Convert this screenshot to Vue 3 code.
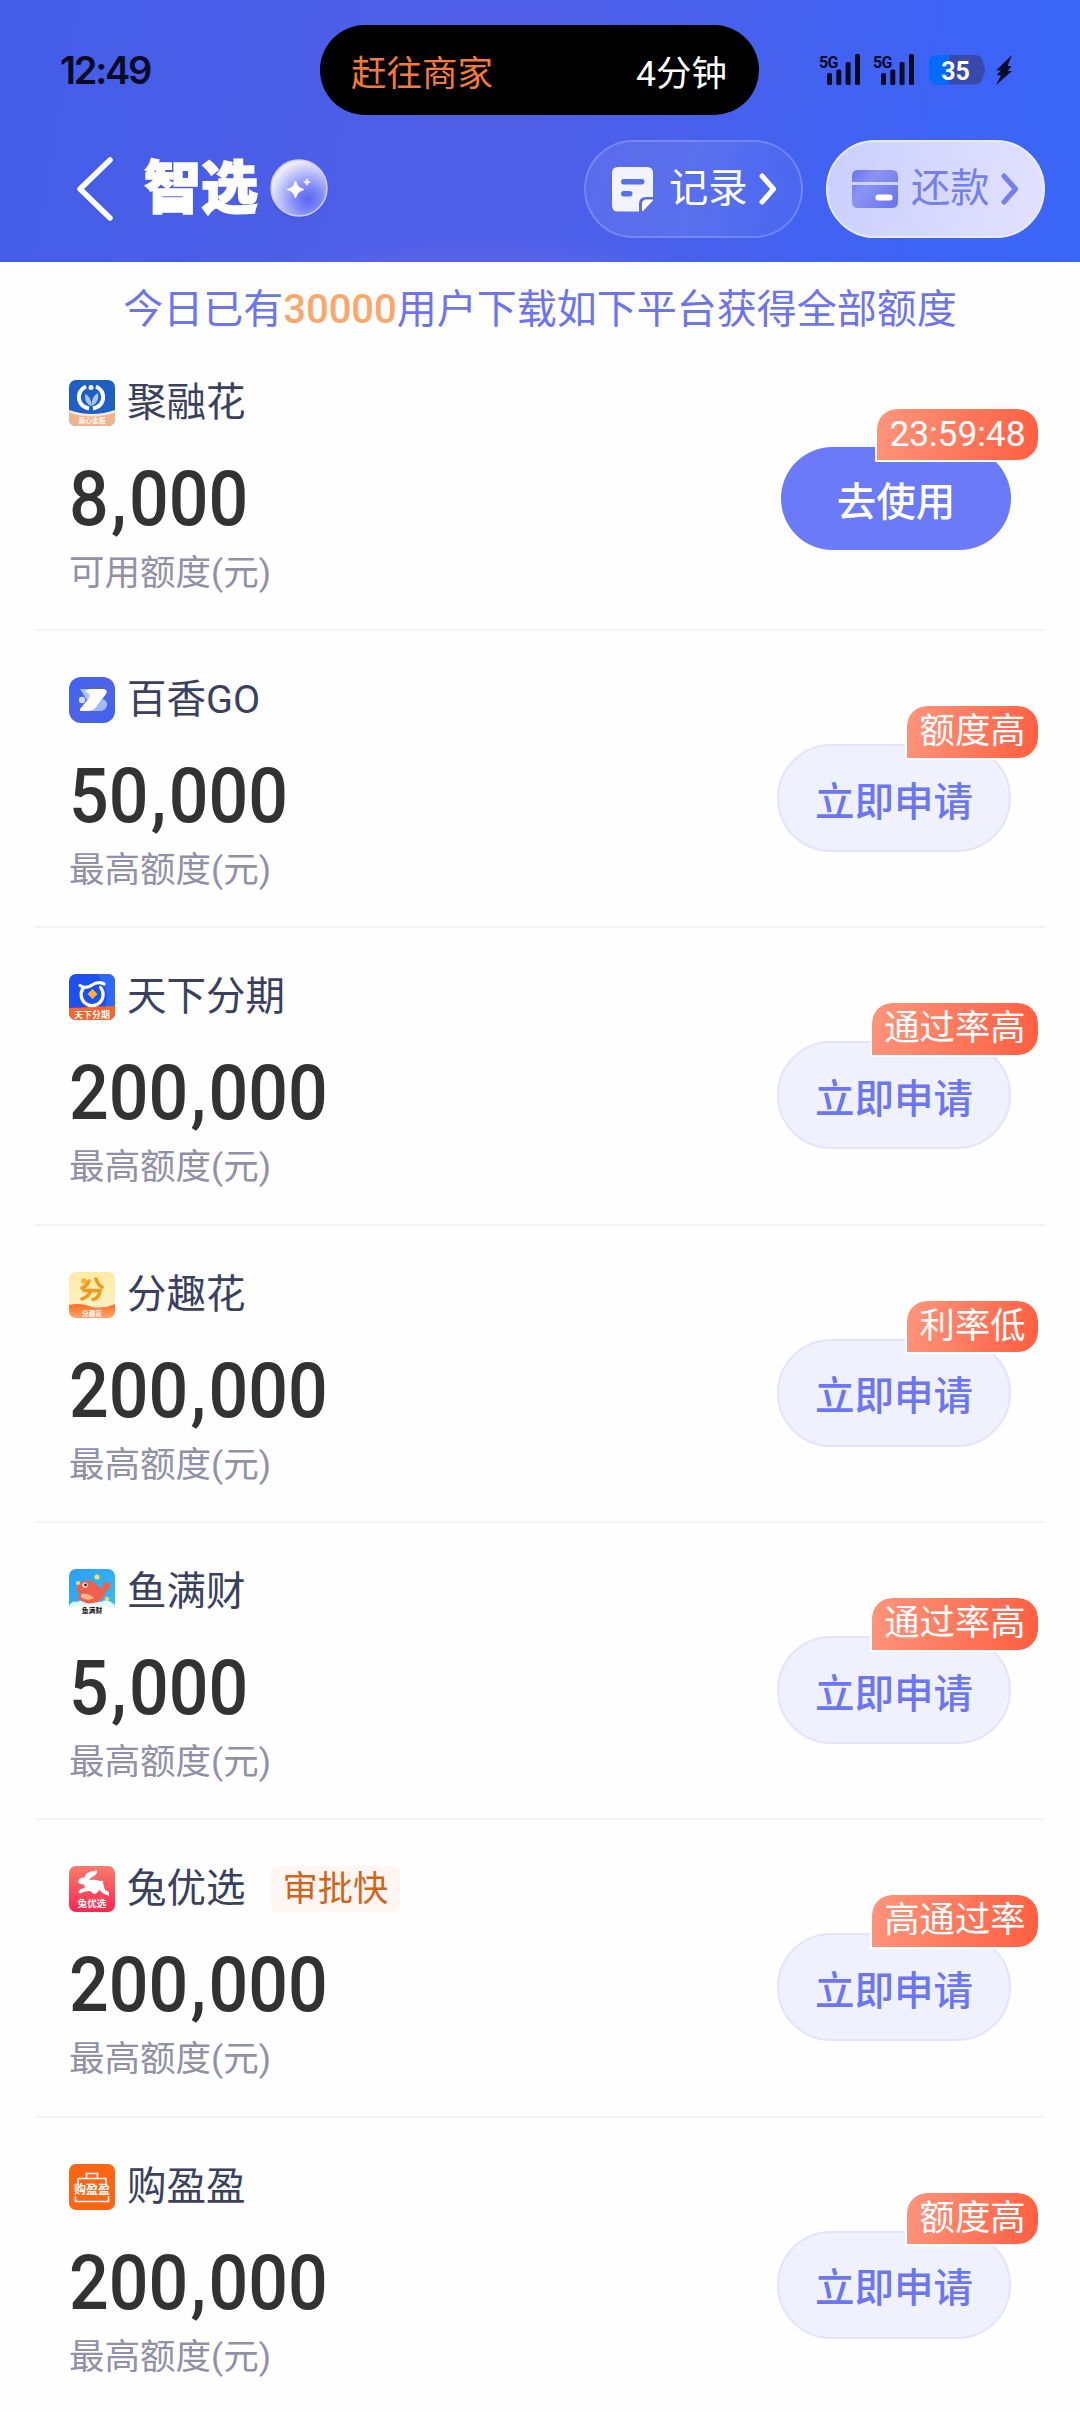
<script setup>
const offers = [
  { id: 'jurong', name: '聚融花', amount: '8,000', label: '可用额度(元)', action: '去使用', primary: true, badge: '23:59:48' },
  { id: 'baixiang', name: '百香GO', amount: '50,000', label: '最高额度(元)', action: '立即申请', badge: '额度高' },
  { id: 'tianxia', name: '天下分期', amount: '200,000', label: '最高额度(元)', action: '立即申请', badge: '通过率高' },
  { id: 'fenqu', name: '分趣花', amount: '200,000', label: '最高额度(元)', action: '立即申请', badge: '利率低' },
  { id: 'yuman', name: '鱼满财', amount: '5,000', label: '最高额度(元)', action: '立即申请', badge: '通过率高' },
  { id: 'tuyou', name: '兔优选', tag: '审批快', amount: '200,000', label: '最高额度(元)', action: '立即申请', badge: '高通过率' },
  { id: 'gouying', name: '购盈盈', amount: '200,000', label: '最高额度(元)', action: '立即申请', badge: '额度高' },
]
</script>

<template>
  <main class="page">
    <header class="header">
      <div class="status">
        <span class="clock">12:49</span>
        <div class="island">
          <span class="island-task">赶往商家</span>
          <span class="island-eta">4分钟</span>
        </div>
        <div class="status-icons">
          <svg v-for="n in 2" :key="n" class="signal" width="42" height="34" viewBox="0 0 42 34">
            <text x="0" y="15" class="net">5G</text>
            <rect x="8" y="20" width="5" height="12" rx="1.5" />
            <rect x="17.3" y="16.5" width="5" height="15.5" rx="1.5" />
            <rect x="26.6" y="9" width="5" height="23" rx="1.5" />
            <rect x="36" y="1" width="5" height="31" rx="1.5" />
          </svg>
          <svg class="battery" width="56" height="30" viewBox="0 0 56 30">
            <defs>
              <clipPath id="cell"><rect width="54" height="29.5" rx="8" /></clipPath>
            </defs>
            <path d="M54 10q2 .5 2 5t-2 5z" fill="#3546b4" />
            <g clip-path="url(#cell)">
              <rect width="54" height="30" fill="#3749aa" />
              <rect width="20" height="30" fill="#066aff" />
            </g>
            <text x="26.5" y="24.5" text-anchor="middle" class="charge">35</text>
          </svg>
          <svg class="bolt" width="18" height="32" viewBox="0 0 18 32">
            <path d="M17 1 1 16.500h5L1.500 21l4.500.500L1 31l16-14h-4.500l4-4.500-4-.500z" fill="#070b26" />
          </svg>
        </div>
      </div>

      <nav class="nav">
        <svg class="back" width="40" height="68" viewBox="0 0 40 68">
          <path d="M35 5 5 34l30 29" fill="none" stroke="#fff" stroke-width="5.500" stroke-linecap="round" stroke-linejoin="round" />
        </svg>
        <h1 class="title">智选</h1>
        <svg class="orb" width="64" height="70" viewBox="0 0 64 70">
          <defs>
            <radialGradient id="orbFill" cx=".66" cy=".7" r=".68">
              <stop offset="0" stop-color="#5c64f4" />
              <stop offset=".35" stop-color="#808af8" />
              <stop offset=".7" stop-color="#b9bdfa" />
              <stop offset="1" stop-color="#eceafc" />
            </radialGradient>
            <radialGradient id="orbShade">
              <stop offset=".7" stop-color="#3040c0" stop-opacity=".35" />
              <stop offset="1" stop-color="#3040c0" stop-opacity="0" />
            </radialGradient>
          </defs>
          <circle cx="32" cy="37" r="31" fill="url(#orbShade)" />
          <circle cx="32" cy="34" r="28" fill="url(#orbFill)" stroke="#c9cefc" stroke-width="1.500" />
          <path d="M28.500 27q1.500 7 8.500 8.500-7 1.500-8.500 8.500-1.500-7-8.500-8.500 7-1.500 8.500-8.500z" fill="#fff" stroke="#fff" stroke-linejoin="round" />
          <path d="M40 24q.8 3.200 4 4-3.200.8-4 4-.8-3.200-4-4 3.200-.8 4-4z" fill="#f2f3ff" />
        </svg>
        <div class="actions">
          <button class="pill pill-record">
            <svg width="42" height="45" viewBox="0 0 42 45">
              <path d="M6 0h29q6 0 6 6v24h-7q-7 0-7 7v7.500H6q-6 0-6-6V6q0-6 6-6z" fill="#f1f3ff" />
              <path d="M41 32.500v1L31 44h-1v-7q0-4.500 4.500-4.500z" fill="#fff" />
              <rect x="9" y="12" width="23.500" height="5.500" rx="2.700" fill="#5b6deb" />
              <rect x="9" y="24" width="11.500" height="5.500" rx="2.700" fill="#5b6deb" />
            </svg>
            <span>记录</span>
            <svg class="arrow" width="18" height="34" viewBox="0 0 18 34">
              <path d="m3 4 11.500 13L3 30" fill="none" stroke="currentColor" stroke-width="5" stroke-linecap="round" stroke-linejoin="round" />
            </svg>
          </button>
          <button class="pill pill-repay">
            <svg width="46" height="40" viewBox="0 0 46 40">
              <defs>
                <linearGradient id="card" x1="0" y1="0" x2="1" y2=".7">
                  <stop offset="0" stop-color="#6673e8" />
                  <stop offset=".4" stop-color="#8b94f3" />
                  <stop offset="1" stop-color="#6c78ec" />
                </linearGradient>
              </defs>
              <path d="M0 13V7q0-6 6-6h34q6 0 6 6v6zM0 16h46v17q0 6-6 6H6q-6 0-6-6z" fill="url(#card)" />
              <rect x="23.500" y="25.500" width="17" height="6" rx="2.500" fill="#fff" />
            </svg>
            <span>还款</span>
            <svg class="arrow" width="18" height="34" viewBox="0 0 18 34">
              <path d="m3 4 11.500 13L3 30" fill="none" stroke="currentColor" stroke-width="5" stroke-linecap="round" stroke-linejoin="round" />
            </svg>
          </button>
        </div>
      </nav>
    </header>

    <p class="notice">今日已有<em>30000</em>用户下载如下平台获得全部额度</p>

    <ul class="list">
      <li v-for="offer in offers" :key="offer.id" class="offer">
        <div class="info">
          <div class="heading">
            <svg class="logo" width="46" height="46" viewBox="0 0 46 46">
              <g v-if="offer.id === 'jurong'">
                <rect width="46" height="46" fill="#1f5fc4" />
                <path d="M0 31q23 8 46 0v15H0z" fill="#efb590" />
                <path d="M0 30q23 8 46 0v2.500q-23 8-46 0z" fill="#f8e6dc" />
                <path d="M17 6.500Q9 10 10 19.500q2 7.500 10 9M27 6.500q8 3.500 7 13-2 7.500-10 9" fill="none" stroke="#fff" stroke-width="4" />
                <circle cx="22" cy="7.500" r="2.500" fill="#fff" />
                <path d="M16 14q6 2 6.500 12-7-2-6.500-12zM29 13q-6.500 3-6.500 13 8-3 6.500-13z" fill="#a9c4f2" />
                <text x="23" y="43" text-anchor="middle" class="mini" font-size="6.800" fill="#fdf3ea">赢心金服</text>
              </g>
              <g v-else-if="offer.id === 'baixiang'">
                <rect width="46" height="46" rx="12" fill="url(#bx)" />
                <defs>
                  <linearGradient id="bx" x1="0" y1="0" x2="1" y2="1">
                    <stop offset="0" stop-color="#3c63f0" />
                    <stop offset=".5" stop-color="#5064e8" />
                    <stop offset="1" stop-color="#3e5fee" />
                  </linearGradient>
                </defs>
                <path d="M11 12h11l3 9-7 2z" fill="#a9c4fa" />
                <path d="M34 22q5 2 4 7-2 5-7 5H21z" fill="#9dbdfa" />
                <path d="M21 12h14q4 1 2 5L27 30q-3 4-7 4h-9v-2l9-11q2-3-1-5l-3-2z" fill="#fff" />
                <circle cx="13" cy="23" r="3.200" fill="#cfe0ff" />
              </g>
              <g v-else-if="offer.id === 'tianxia'">
                <rect width="46" height="46" fill="#1c50ef" />
                <path d="M28 0h18v34H36q6-18-8-34z" fill="#2f68f8" />
                <path d="M0 34q23-1 46-2v14H0z" fill="#f9642a" />
                <path d="M31.500 13.500A11 11 0 1 1 14 14.500M11 11.500q6 4 12-.5 6-4 12-1" fill="none" stroke="#fff" stroke-width="3.200" stroke-linecap="round" />
                <path d="m23.500 15 5 5-5 5-5-5z" fill="#ffb12d" />
                <text x="23" y="43.500" text-anchor="middle" class="mini" font-size="9" fill="#fff" textLength="36">天下分期</text>
              </g>
              <g v-else-if="offer.id === 'fenqu'">
                <defs>
                  <linearGradient id="fqBg" x1="0" y1="0" x2="0" y2="1">
                    <stop offset="0" stop-color="#fdeaa5" />
                    <stop offset="1" stop-color="#fff3cc" />
                  </linearGradient>
                  <linearGradient id="fqBar" x1="0" y1="0" x2="0" y2="1">
                    <stop offset="0" stop-color="#fb6d2b" />
                    <stop offset="1" stop-color="#fda564" />
                  </linearGradient>
                </defs>
                <rect width="46" height="46" fill="url(#fqBg)" />
                <path d="M0 33q12-3 23 2 12 2 23-3v14H0z" fill="url(#fqBar)" />
                <g fill="none" stroke="#f09c1b" stroke-width="3.600" stroke-linecap="round">
                  <path d="M20 9q-2 5-7 7M27 7q2 6 6 8" />
                  <path d="M15 18.500h16q-1 8-7 9M21.500 19q-2 6-8.500 8" />
                </g>
                <circle cx="15" cy="9" r="2.800" fill="#f7b42c" />
                <text x="23" y="43.500" text-anchor="middle" class="mini" font-size="6.600" fill="#fff">分趣花</text>
              </g>
              <g v-else-if="offer.id === 'yuman'">
                <defs>
                  <linearGradient id="sea" x1="0" y1="0" x2="1" y2="1">
                    <stop offset="0" stop-color="#2d9df3" />
                    <stop offset="1" stop-color="#36bdf5" />
                  </linearGradient>
                </defs>
                <rect width="46" height="46" fill="#fff" />
                <path d="M0 0h46v38q-23-9-46 0z" fill="url(#sea)" />
                <path d="M0 37q3-6 8-4 6-4 11 1 7-3 13-1 6-4 14 3v10H0z" fill="#e3f7ff" />
                <path d="M9 16q10-9 19 0l4 4q3-3 1-7 4 2 7 0 3 1 0 7-2 3-4 3-1 10-12 11-9 2-16-6l3-3-4-4z" fill="#f0604a" />
                <path d="M12 25q8-1 13 4-7 4-13-1z" fill="#fbb58d" />
                <circle cx="16" cy="16" r="2.600" fill="#fff" />
                <circle cx="16.500" cy="16" r="1.400" fill="#20242c" />
                <circle cx="28" cy="8" r="2.600" fill="#f5e057" />
                <circle cx="9" cy="14" r="2" fill="#ffd84d" />
                <circle cx="38" cy="30" r="2.200" fill="#f4d94e" />
                <path d="M0 46v-8q10 0 12-2h22q4 2 12 2v8z" fill="#fff" />
                <text x="23" y="43.500" text-anchor="middle" class="mini" font-size="6.800" fill="#111">鱼满财</text>
              </g>
              <g v-else-if="offer.id === 'tuyou'">
                <defs>
                  <linearGradient id="ty" x1="0" y1="0" x2="0" y2="1">
                    <stop offset="0" stop-color="#f87c6c" />
                    <stop offset="1" stop-color="#fb2650" />
                  </linearGradient>
                </defs>
                <rect width="46" height="46" fill="url(#ty)" />
                <path d="M9 16q0-4 7-5 0-5 9-6-1 2 2-1 3 2-2 6-4 2-5 4 7-1 11 1 4-1 3 2l2 7 4 2v4l-5-2-5-4q-2 4-5 4l-4-3-5 .5-5 2-2-1 2-3 5-2-1-3q-5 0-6-2.500z" fill="#fff" />
                <text x="23" y="41" text-anchor="middle" class="mini" font-size="9.600" fill="#fff">兔优选</text>
              </g>
              <g v-else>
                <rect width="46" height="46" fill="#fb6514" />
                <g fill="none" stroke="#fff" stroke-width="1.600">
                  <path d="M17.500 14V9.500h11V14" />
                  <path d="M9 20v-5.500h28V20M6.500 32v5.500h33V32" />
                </g>
                <text x="23" y="30" text-anchor="middle" class="mini" font-size="12" fill="#fff">购盈盈</text>
              </g>
            </svg>
            <span class="name">{{ offer.name }}</span>
            <span v-if="offer.tag" class="tag">{{ offer.tag }}</span>
          </div>
          <div class="amount">
            <span v-for="(ch, i) in offer.amount" :key="i" :class="{ comma: ch === ',' }">{{ ch }}</span>
          </div>
          <div class="label">{{ offer.label }}</div>
        </div>
        <div class="cta">
          <button class="apply" :class="{ primary: offer.primary }">{{ offer.action }}</button>
          <span class="badge">{{ offer.badge }}</span>
        </div>
      </li>
    </ul>
  </main>
</template>

<style>
body {
  margin: 0;
  background: #fff;
}
</style>

<style scoped>
.page {
  width: 1080px;
  height: 2412px;
  overflow: hidden;
  background: #fefefe;
  font-family: Roboto, "Noto Sans CJK SC", sans-serif;
}
button {
  border: 0;
  padding: 0;
  font-family: inherit;
}
.header {
  box-sizing: border-box;
  height: 262px;
  background:
    radial-gradient(ellipse 260px 60px at 480px 290px, rgba(120, 110, 240, 0.22) 60%, transparent 92%),
    linear-gradient(100deg, #435de8 0%, #4c5ee8 30%, #4f5ee7 48%, #4661ee 68%, #3c64f6 88%, #3a66f8 100%);
}
.status {
  display: flex;
  align-items: center;
  height: 140px;
}
.clock {
  width: 260px;
  padding-left: 60px;
  font: 600 38px/44px Inter, sans-serif;
  letter-spacing: -2.3px;
  color: #070b26;
}
.island {
  box-sizing: border-box;
  display: flex;
  align-items: center;
  justify-content: space-between;
  width: 439px;
  height: 90px;
  padding: 0 32px 0 31px;
  border-radius: 45px;
  background: #000;
  color: #fff;
  font-size: 35.5px;
}
.island-task {
  color: #f57a38;
}
.status-icons {
  display: flex;
  align-items: center;
  margin-left: 60px;
  fill: #070b26;
}
.signal + .signal {
  margin-left: 12px;
}
.net {
  font: 700 16px Roboto, sans-serif;
  letter-spacing: -0.8px;
}
.battery {
  margin-left: 14px;
}
.charge {
  font: 700 25px Roboto, sans-serif;
  fill: #fff;
}
.bolt {
  margin-left: 10px;
}
.nav {
  display: flex;
  align-items: center;
  height: 98px;
  padding: 0 35px 0 75px;
}
.title {
  margin: 0 0 0 29px;
  font-size: 57px;
  line-height: 70px;
  font-weight: 900;
  color: #fff;
  -webkit-text-stroke: 1.5px #fff;
}
.orb {
  margin-left: 9px;
}
.actions {
  display: flex;
  gap: 23px;
  margin-left: auto;
}
.pill {
  box-sizing: border-box;
  display: flex;
  align-items: center;
  width: 219px;
  height: 98px;
  padding-left: 26px;
  border: 2px solid rgba(160, 175, 255, 0.4);
  border-radius: 49px;
  background: linear-gradient(100deg, rgba(255, 255, 255, 0.08), rgba(255, 255, 255, 0.1) 50%, rgba(255, 255, 255, 0.03));
  color: #fff;
  font-size: 39.3px;
  line-height: 50px;
}
.pill span {
  margin: 0 11px 0 15px;
}
.pill-repay {
  padding-left: 24px;
  border-color: #e8ebff;
  background: linear-gradient(100deg, #c9cffd, #d6d8ff 50%, #e2e1fe);
  color: #757fec;
}
.pill-repay span {
  margin-left: 13px;
}
.notice {
  margin: 0;
  padding-top: 22px;
  height: 49.700px;
  line-height: 52px;
  font-size: 40px;
  text-align: center;
  color: #6c74f2;
}
.notice em {
  font-style: normal;
  font-weight: 500;
  color: #f9a76b;
}
.list {
  margin: 0;
  padding: 0 35px;
  list-style: none;
}
.offer {
  box-sizing: border-box;
  display: flex;
  justify-content: space-between;
  height: 297.330px;
  padding: 46px 34px 0;
  border-bottom: 2px solid #f3f3f6;
}
.heading {
  display: flex;
  align-items: center;
  height: 46px;
}
.logo {
  border-radius: 7px;
}
.mini {
  font-family: "Noto Sans CJK SC", sans-serif;
  font-weight: 700;
}
.name {
  margin-left: 12px;
  font-size: 39.500px;
  line-height: 46px;
  color: #3a4060;
}
.tag {
  margin-left: 25px;
  padding: 0 12px;
  border-radius: 6px;
  background: #fff6f3;
  font-size: 35.300px;
  line-height: 46px;
  color: #d0661c;
}
.amount {
  display: flex;
  margin-top: 35px;
  font-size: 76px;
  line-height: 76px;
  font-weight: 500;
  color: #323232;
  transform: scaleX(0.92);
  transform-origin: left;
}
.comma {
  width: 22px;
  text-align: center;
}
.label {
  margin-top: 13px;
  font-size: 35.500px;
  line-height: 46px;
  color: #9090a8;
}
.cta {
  position: relative;
  margin-top: 67px;
  display: flex;
  align-items: center;
  height: 108px;
}
.apply {
  box-sizing: border-box;
  width: 234px;
  height: 108px;
  border: 2px solid #e3e4fa;
  border-radius: 54px;
  background: #eff1fe;
  font-size: 39.500px;
  font-weight: 500;
  color: #6c76f5;
}
.apply.primary {
  width: 230px;
  height: 103px;
  margin-bottom: 4px;
  border: 0;
  background: #6b7af9;
  color: #fff;
}
.badge {
  position: absolute;
  right: -29px;
  top: -40px;
  padding: 0 12.500px;
  border: 2px solid #fff;
  border-radius: 22px 22px 22px 0;
  background: linear-gradient(100deg, #fe957c, #ff5e40) padding-box;
  font-size: 35.300px;
  line-height: 51.500px;
  color: #fff;
  white-space: nowrap;
}
</style>
